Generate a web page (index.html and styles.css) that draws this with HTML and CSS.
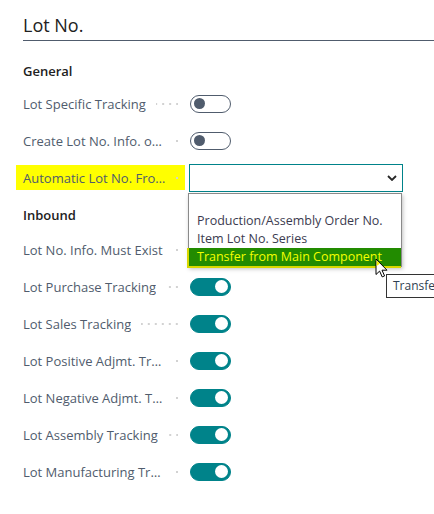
FILE: index.html
```html
<!DOCTYPE html>
<html lang="en">

<head>
    <meta charset="UTF-8">
    <meta name="viewport" content="width=device-width, initial-scale=1.0">
    <title>Lot No.</title>
    <link rel="stylesheet" href="styles.css">
</head>

<body>
    <div class="page">
        <h1 class="page-title">Lot No.</h1>

        <h2 class="group-title">General</h2>
        <div class="field">
            <div class="field-label"><span class="label-text">Lot Specific Tracking</span><span class="leader"></span></div>
            <span class="toggle"></span>
        </div>
        <div class="field">
            <div class="field-label"><span class="label-text">Create Lot No. Info. on posting</span><span class="leader"></span></div>
            <span class="toggle"></span>
        </div>
        <div class="field field-open">
            <div class="field-label marked"><span class="label-text">Automatic Lot No. From</span><span class="leader"></span></div>
            <div class="select">
                <svg class="chevron" width="10" height="6" viewBox="0 0 10 6"><path d="M1 1l4 4 4-4" fill="none" stroke="#262626" stroke-width="1.8"/></svg>
            </div>

            <!-- open option list of the select -->
            <ul class="option-list">
                <li class="option"></li>
                <li class="option">Production/Assembly Order No.</li>
                <li class="option">Item Lot No. Series</li>
                <li class="option active">Transfer from Main Component</li>
            </ul>
            <svg class="cursor" width="13" height="20" viewBox="0 0 13 20">
                <path d="M1 1v15.5l3.6-3.4 2.6 5.8 2.4-1-2.6-5.7h5z" fill="#fff" stroke="#000" stroke-width="1" stroke-linejoin="round"/>
                <path d="M1.6 2.4v5.5l3.5-2.4z" fill="#f4f000"/>
            </svg>
            <div class="tooltip">Transfer from Main Component</div>
        </div>

        <h2 class="group-title inbound">Inbound</h2>
        <div class="field">
            <div class="field-label"><span class="label-text">Lot No. Info. Must Exist</span><span class="leader"></span></div>
            <span class="toggle on"></span>
        </div>
        <div class="field">
            <div class="field-label"><span class="label-text">Lot Purchase Tracking</span><span class="leader"></span></div>
            <span class="toggle on"></span>
        </div>
        <div class="field">
            <div class="field-label"><span class="label-text">Lot Sales Tracking</span><span class="leader"></span></div>
            <span class="toggle on"></span>
        </div>
        <div class="field">
            <div class="field-label"><span class="label-text">Lot Positive Adjmt. Tracking</span><span class="leader"></span></div>
            <span class="toggle on"></span>
        </div>
        <div class="field">
            <div class="field-label"><span class="label-text">Lot Negative Adjmt. Tracking</span><span class="leader"></span></div>
            <span class="toggle on"></span>
        </div>
        <div class="field">
            <div class="field-label"><span class="label-text">Lot Assembly Tracking</span><span class="leader"></span></div>
            <span class="toggle on"></span>
        </div>
        <div class="field">
            <div class="field-label"><span class="label-text">Lot Manufacturing Tracking</span><span class="leader"></span></div>
            <span class="toggle on"></span>
        </div>
    </div>
</body>

</html>
```

FILE: styles.css
```css
body {
    margin: 0;
    background-color: white;
    font-family: "Open Sans", "Noto Sans", Arial, sans-serif;
    color: #212121;
    overflow: hidden;
}

.page {
    padding-left: 23px;
    height: 514px;
}

.page-title {
    margin: 0;
    padding-top: 13px;
    padding-bottom: 3px;
    font-size: 18px;
    line-height: 24px;
    font-weight: 400;
    border-bottom: 1px solid #505c6d;
}

.group-title {
    margin: 20px 0 4px;
    font-size: 13px;
    line-height: 20px;
    font-weight: 600;
    color: #212121;
}

.group-title.inbound {
    margin: 9px 0 6px;
}

.field {
    display: flex;
    align-items: center;
    height: 37px;
    position: relative;
}

.field-label {
    display: flex;
    align-items: center;
    width: 155px;
    margin-right: 11px;
    font-size: 13px;
    line-height: 20px;
    color: #505c6d;
}

.field-label.marked {
    background-color: #ffff00;
    margin-left: -7px;
    padding-left: 7px;
    padding-right: 7px;
    width: 155px;
    margin-right: 4px;
    height: 25px;
}

.label-text {
    white-space: nowrap;
    overflow: hidden;
    text-overflow: ellipsis;
    max-width: 143px;
}

/* dotted leader between caption and value */
.leader {
    flex: 1;
    height: 2px;
    margin-left: 10px;
    background-image: linear-gradient(to right, transparent 5px, #d2d2d2 5px);
    background-size: 7px 2px;
    background-repeat: repeat-x;
    background-position: right center;
}

.toggle {
    position: relative;
    box-sizing: border-box;
    width: 41px;
    height: 18px;
    margin-left: 1px;
    border: 1.5px solid #505c6d;
    border-radius: 9px;
}

.toggle::after {
    content: "";
    position: absolute;
    left: 3px;
    top: 2px;
    width: 11px;
    height: 11px;
    border-radius: 50%;
    background-color: #505c6d;
}

.toggle.on {
    border-color: #00838a;
    background-color: #00838a;
}

.toggle.on::after {
    left: auto;
    right: 2px;
    top: 1px;
    width: 13px;
    height: 13px;
    background-color: white;
}

.select {
    box-sizing: border-box;
    width: 214px;
    height: 28px;
    border: 1px solid #00838a;
    display: flex;
    align-items: center;
    justify-content: flex-end;
    padding-right: 5px;
}

.option-list {
    position: absolute;
    left: 165px;
    top: 34px;
    width: 214px;
    box-sizing: border-box;
    margin: 0;
    padding: 0;
    list-style: none;
    background-color: white;
    border: 1px solid #8a8a8a;
    box-shadow: 1px 2px 4px rgba(0, 0, 0, 0.25);
    z-index: 2;
}

.option {
    height: 18px;
    padding-left: 8px;
    font-size: 12.5px;
    line-height: 18px;
    color: #3b3b4f;
    white-space: nowrap;
}

.option:first-child {
    height: 18px;
}

.option.active {
    background-color: #228b00;
    color: #f4ff00;
    margin-left: -2px;
    padding-left: 8px;
    border-left: 2px solid #d8d800;
    border-bottom: 2px solid #d8d800;
    margin-bottom: -2px;
}

.cursor {
    position: absolute;
    left: 352px;
    top: 99px;
    z-index: 4;
}

.tooltip {
    position: absolute;
    left: 363px;
    top: 115px;
    height: 24px;
    box-sizing: border-box;
    padding: 0 6px;
    border: 1px solid #333;
    background-color: white;
    font-size: 12px;
    line-height: 22px;
    color: #2f3f52;
    white-space: nowrap;
    z-index: 3;
}
```
